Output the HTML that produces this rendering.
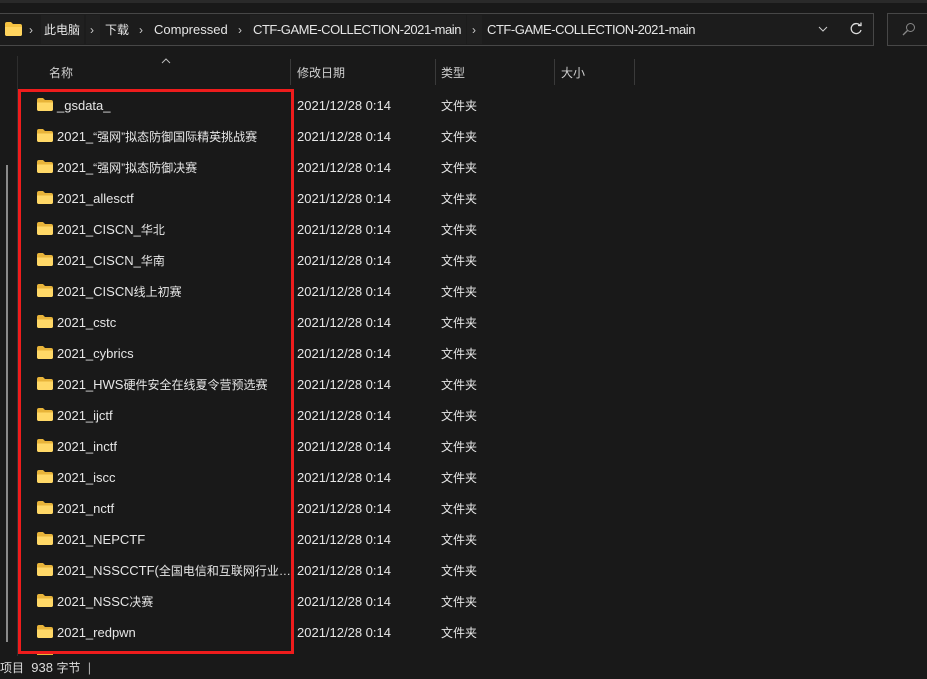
<!DOCTYPE html>
<html><head><meta charset="utf-8"><style>
body{margin:0;width:927px;height:679px;background:#191919;overflow:hidden;position:relative;font-family:"Liberation Sans","Noto Sans CJK SC",sans-serif;color:#e6e6e6;font-size:13px}
.abs{position:absolute}
.top{left:0;top:0;width:927px;height:3px;background:#2a2a2a}
.addr{left:0;top:13px;width:874px;height:33px;border:1px solid #474747;border-left:none;box-sizing:border-box;background:#1c1c1c}
.search{left:887px;top:13px;width:45px;height:33px;border:1px solid #474747;box-sizing:border-box;background:#1c1c1c}
.seg{top:15px;height:29px;background:#202020}
.t{white-space:nowrap;line-height:16px}
.c{font-size:12px}
.chev{color:#ccc;font-size:12px}
.hdr{color:#cfcfcf}
.div{top:59px;width:1px;height:26px;background:#3a3a3a}
.ctf{letter-spacing:-0.45px}
</style></head><body>
<div class="abs top"></div>
<div class="abs addr"></div>
<div class="abs search"></div>
<div class="abs seg" style="left:41px;width:43px"></div>
<div class="abs seg" style="left:86px;width:14px"></div>
<div class="abs seg" style="left:250px;width:216px"></div>
<div class="abs seg" style="left:467px;width:15px"></div>
<svg class="abs" style="left:5px;top:22px" width="17" height="14"><path d="M0 2 Q0 0 2 0 H6 L8 2 H15 Q17 2 17 4 V12 Q17 14 15 14 H2 Q0 14 0 12Z" fill="#f5c242"/><path d="M0 5 H17 V12 Q17 14 15 14 H2 Q0 14 0 12Z" fill="#ffd45e"/></svg>
<div class="abs t chev" style="left:29px;top:22px">›</div>
<div class="abs t c" style="left:44px;top:22px">此电脑</div>
<div class="abs t chev" style="left:90px;top:22px">›</div>
<div class="abs t c" style="left:105px;top:22px">下载</div>
<div class="abs t chev" style="left:139px;top:22px">›</div>
<div class="abs t" style="left:154px;top:22px">Compressed</div>
<div class="abs t chev" style="left:238px;top:22px">›</div>
<div class="abs t ctf" style="left:253px;top:22px">CTF-GAME-COLLECTION-2021-main</div>
<div class="abs t chev" style="left:472px;top:22px">›</div>
<div class="abs t ctf" style="left:487px;top:22px">CTF-GAME-COLLECTION-2021-main</div>
<svg class="abs" style="left:818px;top:25px" width="10" height="8"><path d="M1 2 L5 6 L9 2" stroke="#ccc" fill="none"/></svg>
<svg class="abs" style="left:849px;top:22px" width="14" height="14"><path d="M11.5 4 A5 5 0 1 0 12 8" stroke="#ddd" stroke-width="1.3" fill="none"/><path d="M9 3.5 H12 V0.5" stroke="#ddd" stroke-width="1.3" fill="none"/></svg>
<svg class="abs" style="left:902px;top:22px" width="14" height="14"><circle cx="8.5" cy="5.5" r="4" stroke="#888" fill="none"/><path d="M5.5 8.5 L1 13" stroke="#888" stroke-width="1.3"/></svg>
<div class="abs" style="left:17px;top:56px;width:1px;height:600px;background:#2e2e2e"></div>
<div class="abs" style="left:6px;top:165px;width:2px;height:477px;background:#8a8a8a"></div>
<svg class="abs" style="left:161px;top:58px" width="10" height="6"><path d="M1 5 L5 1 L9 5" stroke="#bbb" fill="none"/></svg>
<div class="abs t hdr c" style="left:49px;top:65px">名称</div>
<div class="abs div" style="left:290px"></div>
<div class="abs t hdr c" style="left:297px;top:65px">修改日期</div>
<div class="abs div" style="left:435px"></div>
<div class="abs t hdr c" style="left:441px;top:65px">类型</div>
<div class="abs div" style="left:554px"></div>
<div class="abs t hdr c" style="left:561px;top:65px">大小</div>
<div class="abs div" style="left:634px"></div>
<div id="rows"></div>
<script>
var n=["_gsdata_","2021_“强网”拟态防御国际精英挑战赛","2021_“强网”拟态防御决赛","2021_allesctf","2021_CISCN_华北","2021_CISCN_华南","2021_CISCN线上初赛","2021_cstc","2021_cybrics","2021_HWS硬件安全在线夏令营预选赛","2021_ijctf","2021_inctf","2021_iscc","2021_nctf","2021_NEPCTF","2021_NSSCCTF(全国电信和互联网行业…","2021_NSSC决赛","2021_redpwn"];
function w(s){return s.replace(/([\u3000-\u9fff\uff00-\uffef“”…]+)/g,'<span class="c">$1</span>');}
var h="";n.forEach(function(s,i){var y=98+31*i;
h+='<svg class="abs" style="left:37px;top:'+y+'px" width="16" height="13"><path d="M0 2 Q0 0 2 0 H6 L8 2 H14 Q16 2 16 4 V11 Q16 13 14 13 H2 Q0 13 0 11Z" fill="#e8b43a"/><path d="M0 4.5 H16 V11 Q16 13 14 13 H2 Q0 13 0 11Z" fill="#ffd867"/></svg>';
h+='<div class="abs t" style="left:57px;top:'+y+'px">'+w(s)+'</div><div class="abs t" style="left:297px;top:'+y+'px">2021/12/28 0:14</div><div class="abs t c" style="left:441px;top:'+y+'px">文件夹</div>';});
h+='<svg class="abs" style="left:37px;top:651px" width="16" height="4"><rect width="16" height="4" fill="#e8b43a"/></svg>';
document.getElementById("rows").innerHTML=h;
</script>
<div class="abs" style="left:18px;top:89px;width:276px;height:565px;border:3px solid #ee1c1c;box-sizing:border-box"></div>
<div class="abs t" style="left:0;top:660px;color:#ddd"><span class="c">项目</span>&nbsp; 938 <span class="c">字节</span>&nbsp; <span style="color:#aaa">|</span></div>
</body></html>
